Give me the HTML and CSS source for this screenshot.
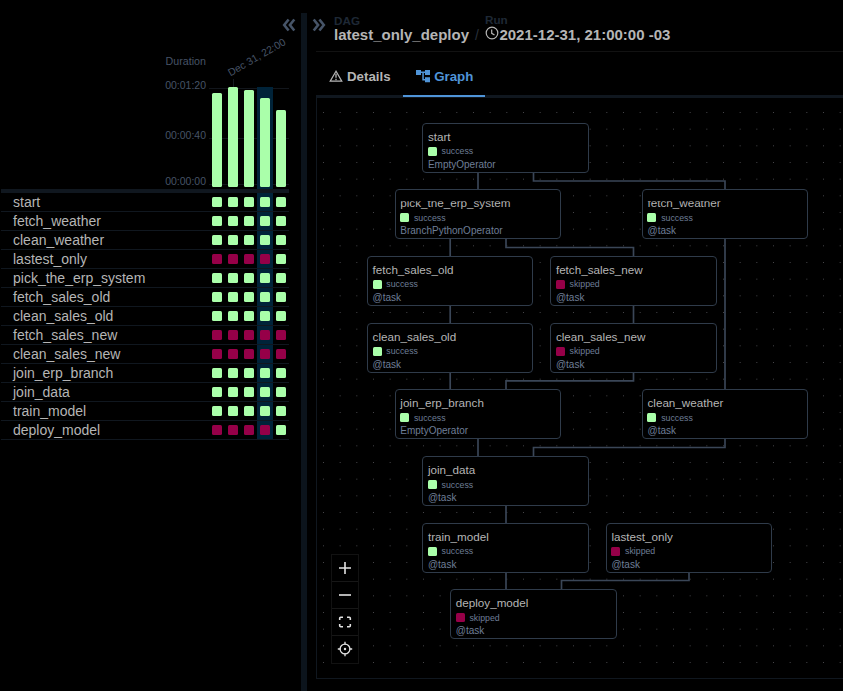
FILE: index.html
```html
<!DOCTYPE html>
<html lang="en">
<head>
<meta charset="utf-8">
<title>latest_only_deploy</title>
<link rel="stylesheet" href="styles.css">
</head>
<body>
<div class="app">
<aside class="grid-panel">
  <button class="collapse" aria-label="Collapse"><svg width="14" height="14" viewBox="0 0 14 14"><path d="M6.600 1.500 2.200 7l4.400 5.500M12.300 1.500 7.900 7l4.400 5.500"/></svg></button>
  <div class="chart">
    <div class="axis"><span class="ax-title">Duration</span><span class="ax-top">00:01:20</span><span class="ax-mid">00:00:40</span><span>00:00:00</span></div>
    <div class="plot">
      <span class="run-date">Dec 31, 22:00</span>
      <b class="tick"></b><b class="line l1"></b><b class="line l2"></b><b class="line l3"></b>
      <div class="col"><i class="bar h1"></i></div><div class="col"><i class="bar h2"></i></div><div class="col"><i class="bar h3"></i></div><div class="col sel"><i class="bar h4"></i></div><div class="col"><i class="bar h5"></i></div>
    </div>
  </div>
  <div class="rows">
    <div class="row"><span>start</span><u><i></i></u><u><i></i></u><u><i></i></u><u class="sel"><i></i></u><u><i></i></u></div>
    <div class="row"><span>fetch_weather</span><u><i></i></u><u><i></i></u><u><i></i></u><u class="sel"><i></i></u><u><i></i></u></div>
    <div class="row"><span>clean_weather</span><u><i></i></u><u><i></i></u><u><i></i></u><u class="sel"><i></i></u><u><i></i></u></div>
    <div class="row skip"><span>lastest_only</span><u><i></i></u><u><i></i></u><u><i></i></u><u class="sel"><i></i></u><u><i class="ok"></i></u></div>
    <div class="row"><span>pick_the_erp_system</span><u><i></i></u><u><i></i></u><u><i></i></u><u class="sel"><i></i></u><u><i></i></u></div>
    <div class="row"><span>fetch_sales_old</span><u><i></i></u><u><i></i></u><u><i></i></u><u class="sel"><i></i></u><u><i></i></u></div>
    <div class="row"><span>clean_sales_old</span><u><i></i></u><u><i></i></u><u><i></i></u><u class="sel"><i></i></u><u><i></i></u></div>
    <div class="row skip"><span>fetch_sales_new</span><u><i></i></u><u><i></i></u><u><i></i></u><u class="sel"><i></i></u><u><i></i></u></div>
    <div class="row skip"><span>clean_sales_new</span><u><i></i></u><u><i></i></u><u><i></i></u><u class="sel"><i></i></u><u><i></i></u></div>
    <div class="row"><span>join_erp_branch</span><u><i></i></u><u><i></i></u><u><i></i></u><u class="sel"><i></i></u><u><i></i></u></div>
    <div class="row"><span>join_data</span><u><i></i></u><u><i></i></u><u><i></i></u><u class="sel"><i></i></u><u><i></i></u></div>
    <div class="row"><span>train_model</span><u><i></i></u><u><i></i></u><u><i></i></u><u class="sel"><i></i></u><u><i></i></u></div>
    <div class="row skip"><span>deploy_model</span><u><i></i></u><u><i></i></u><u><i></i></u><u class="sel"><i></i></u><u><i class="ok"></i></u></div>
  </div>
</aside>
<div class="divider"></div>
<main class="details">
  <header class="crumbs">
    <button class="expand" aria-label="Expand"><svg width="14" height="14" viewBox="0 0 14 14"><path d="M1.700 1.500 6.100 7l-4.400 5.500M7.400 1.500 11.800 7l-4.400 5.500"/></svg></button>
    <div class="crumb"><small>DAG</small><strong>latest_only_deploy</strong></div>
    <span class="slash">/</span>
    <div class="crumb run"><small>Run</small><strong><svg class="clock" width="14" height="14" viewBox="0 0 14 14"><circle cx="7" cy="7" r="5.8"/><path d="M6.7 3.5v3.8l2.8 1.8"/></svg>2021-12-31, 21:00:00 -03</strong></div>
  </header>
  <nav class="tabs">
    <a class="tab"><svg width="14" height="14" viewBox="0 0 14 14"><path class="tri" d="M7 2.2 1.2 12.2h11.6z"/><path class="bang" d="M7 4.8v4M7 9.8v1.4"/></svg>Details</a>
    <a class="tab active"><svg width="14" height="14" viewBox="0 0 14 14"><path d="M0 1h5v1.500h4V1h5v5H9V4H7.800v6H9V8.300h5v5H9v-1.800H6.300V4H5v2H0z"/></svg>Graph</a>
  </nav>
  <section class="canvas">
    <svg class="edges" viewBox="317 98 526 580" width="526" height="580">
      <defs><pattern id="dots" x="315.150" y="104.150" width="16.667" height="16.667" patternUnits="userSpaceOnUse"><circle cx="8.333" cy="8.333" r="0.48" fill="#7c7c82"/></pattern></defs>
      <rect x="317" y="98" width="526" height="580" fill="url(#dots)"/>
      <path class="edge" d="M478 172V190M533.500 172V181H725V190M450.200 239V256M506 239V247.500H633.500V256M450.200 305V323M633.500 305V323M450.200 372V390M633.500 372V380.800H506V390M725 239V390M478 439V456M725 439V447.500H533.500V456M506 505V523M506 572V590M689 572V580.500H561.500V590"/>
    </svg>
    <article class="node x3 r1"><h3>start</h3><p class="state"><i></i>success</p><p>EmptyOperator</p></article>
    <article class="node x2 r2 cut"><h3>pick_the_erp_system</h3><p class="state"><i></i>success</p><p>BranchPythonOperator</p></article>
    <article class="node x7 r2 cut"><h3>fetch_weather</h3><p class="state"><i></i>success</p><p>@task</p></article>
    <article class="node x1 r3"><h3>fetch_sales_old</h3><p class="state"><i></i>success</p><p>@task</p></article>
    <article class="node x5 r3 skip"><h3>fetch_sales_new</h3><p class="state"><i></i>skipped</p><p>@task</p></article>
    <article class="node x1 r4"><h3>clean_sales_old</h3><p class="state"><i></i>success</p><p>@task</p></article>
    <article class="node x5 r4 skip"><h3>clean_sales_new</h3><p class="state"><i></i>skipped</p><p>@task</p></article>
    <article class="node x2 r5"><h3>join_erp_branch</h3><p class="state"><i></i>success</p><p>EmptyOperator</p></article>
    <article class="node x7 r5"><h3>clean_weather</h3><p class="state"><i></i>success</p><p>@task</p></article>
    <article class="node x3 r6"><h3>join_data</h3><p class="state"><i></i>success</p><p>@task</p></article>
    <article class="node x3 r7"><h3>train_model</h3><p class="state"><i></i>success</p><p>@task</p></article>
    <article class="node x6 r7 skip"><h3>lastest_only</h3><p class="state"><i></i>skipped</p><p>@task</p></article>
    <article class="node x4 r8 skip"><h3>deploy_model</h3><p class="state"><i></i>skipped</p><p>@task</p></article>
    <div class="controls">
      <button aria-label="Zoom in"><svg width="14" height="14" viewBox="0 0 14 14"><path d="M7 1v12M1 7h12"/></svg></button>
      <button aria-label="Zoom out"><svg width="14" height="14" viewBox="0 0 14 14"><path d="M1 7h12"/></svg></button>
      <button aria-label="Fit view"><svg width="14" height="14" viewBox="0 0 14 14"><path d="M1.700 5V3.200q0-1 1-1H5M9 2.200h2.300q1 0 1 1V5M12.300 9v1.800q0 1-1 1H9M5 11.800H2.700q-1 0-1-1V9"/></svg></button>
      <button aria-label="Center selected"><svg width="16" height="16" viewBox="0 0 16 16"><circle cx="8" cy="8" r="4.900"/><circle class="dot" cx="8" cy="8" r="1.200"/><path d="M8 .8v3M8 12.200v3M.8 8h3M12.200 8h3"/></svg></button>
    </div>
  </section>
</main>
</div>
</body>
</html>
```
FILE: styles.css
```css
* { box-sizing: border-box; }
body { margin: 0; background: #000; color: #b5b5b5; font-family: "Liberation Sans", Arial, sans-serif; overflow: hidden; }
button { background: none; border: 0; padding: 0; display: flex; align-items: center; justify-content: center; }
h3, p { margin: 0; font-weight: 400; }
svg { display: block; flex: none; fill: none; }
.app { display: flex; width: 843px; height: 691px; }

.grid-panel { width: 301px; flex: none; display: flex; flex-direction: column; padding-left: 1px; }
.collapse { align-self: flex-end; margin: 18px 5px 0 0; height: 14px; }
.collapse svg, .expand svg { stroke: #465468; stroke-width: 2.6; }
.chart { display: flex; height: 161px; width: 288px; border-bottom: 4px solid #10171f; }
.axis { width: 205px; display: flex; flex-direction: column; text-align: right; font-size: 10.5px; line-height: 12px; color: #465366; padding-top: 23px; }
.ax-title { font-size: 10.7px; margin-bottom: 12px; }
.ax-top { margin-bottom: 38px; }
.ax-mid { margin-bottom: 34px; }
.plot { position: relative; flex: 1; display: flex; padding-left: 3px; align-items: flex-end; }
.run-date { position: absolute; left: 26px; top: 35px; font-size: 10.4px; line-height: 12px; white-space: nowrap; color: #465366; transform-origin: 0 100%; transform: rotate(-30deg); }
.tick { position: absolute; left: 27px; top: 47px; width: 1px; height: 8px; background: #161b22; }
.line { position: absolute; left: 3px; right: 0; height: 1px; background: #12161c; }
.l1 { top: 56px; }
.l2 { top: 106px; }
.l3 { top: 152px; }
.col { position: relative; width: 16px; height: 102px; padding-bottom: 2px; display: flex; align-items: flex-end; justify-content: center; }
.sel { background: #002339; }
.bar { width: 10px; border-radius: 1.5px; background: #aaffaa; }
.h1 { height: 94px; }
.h2 { height: 100px; }
.h3 { height: 97px; }
.h4 { height: 89px; }
.h5 { height: 77px; }
.rows { width: 288px; }
.row { display: flex; height: 19px; border-bottom: 1px solid #10171f; padding-left: 12px; font-size: 14px; line-height: 18px; }
.row span { width: 196px; }
.row u { width: 16px; display: flex; align-items: center; justify-content: center; text-decoration: none; }
.row i { width: 10px; height: 10px; border-radius: 1.5px; background: #aaffaa; }
.row.skip i { background: #960048; }
.row.skip i.ok { background: #aaffaa; }

.divider { width: 6px; flex: none; margin-top: 13px; background: #0c141c; }
.details { flex: 1; min-width: 0; margin-left: 9px; display: flex; flex-direction: column; }
.crumbs { height: 52px; border-bottom: 1px solid #121212; display: flex; align-items: flex-start; }
.expand { width: 14px; height: 14px; margin: 18px 8px 0 -4px; }
.crumb { margin-top: 14px; white-space: nowrap; }
.crumb small { display: block; font-size: 11.7px; line-height: 13px; font-weight: 700; color: #1e2835; }
.crumb strong { display: flex; font-size: 15px; line-height: 16px; }
.crumbs .slash { margin: 27px 6px 0 6px; font-size: 14px; line-height: 16px; color: #28303b; }
.clock { stroke: #b5b5b5; stroke-width: 1.2; margin-right: 0.5px; }
.run { margin-top: 13px; }
.run strong { line-height: 18px; }
.tabs { display: flex; height: 46px; border-bottom: 3px solid #10171f; }
.tab { display: flex; align-items: center; gap: 4px; height: 45px; padding: 5px 12px 0 13px; font-size: 13.3px; font-weight: 700; border-bottom: 2px solid transparent; }
.tab svg { stroke: #b5b5b5; }
.tri { stroke-width: 1.2; }
.bang { stroke-width: 1.3; }
.tab.active { color: #4f94d8; border-color: #4f94d8; gap: 4.6px; }
.tab.active svg { fill: #4f94d8; stroke: none; }

.canvas { position: relative; height: 581px; border-left: 1px solid #10171f; border-bottom: 1px solid #10171f; }
.edges { position: absolute; left: 0; top: 0; }
.edge { stroke: #3a4657; stroke-width: 1.667; }
.node { position: absolute; width: 166.700px; height: 50px; border: 1px solid #2f3b4a; border-radius: 4px; background: #000; padding: 6px 0 0 4.800px; color: #6e7e97; font-size: 10px; line-height: 12px; }
.node h3 { font-size: 11.667px; line-height: 13px; height: 15px; color: #b5b5b5; }
.node .state { display: flex; align-items: center; gap: 4.700px; font-size: 8.750px; line-height: 10px; height: 13px; margin-bottom: 1px; }
.state i { width: 9px; height: 9px; border-radius: 1.5px; background: #aaffaa; }
.skip .state i { background: #960048; }
.cut h3 { clip-path: inset(5px 0 0 0); }
.x1 { left: 49.800px; }
.x2 { left: 77.500px; }
.x3 { left: 105.100px; }
.x4 { left: 133px; }
.x5 { left: 233.100px; }
.x6 { left: 288.600px; }
.x7 { left: 324.700px; }
.r1 { top: 24.500px; }
.r2 { top: 91.200px; }
.r3 { top: 157.900px; }
.r4 { top: 224.600px; }
.r5 { top: 291.300px; }
.r6 { top: 358px; }
.r7 { top: 424.600px; }
.r8 { top: 491.200px; }
.controls { position: absolute; left: 14px; top: 456px; width: 28px; border: 1px solid #121212; background: #000; }
.controls button { width: 26px; height: 27px; border-bottom: 1px solid #171717; }
.controls svg { stroke: #e2e2e2; stroke-width: 1.6; }
.controls button:last-child { border-bottom: 0; padding-bottom: 2px; }
.controls button:last-child svg { stroke-width: 1.3; }
.dot { fill: #e2e2e2; stroke: none; }
```
